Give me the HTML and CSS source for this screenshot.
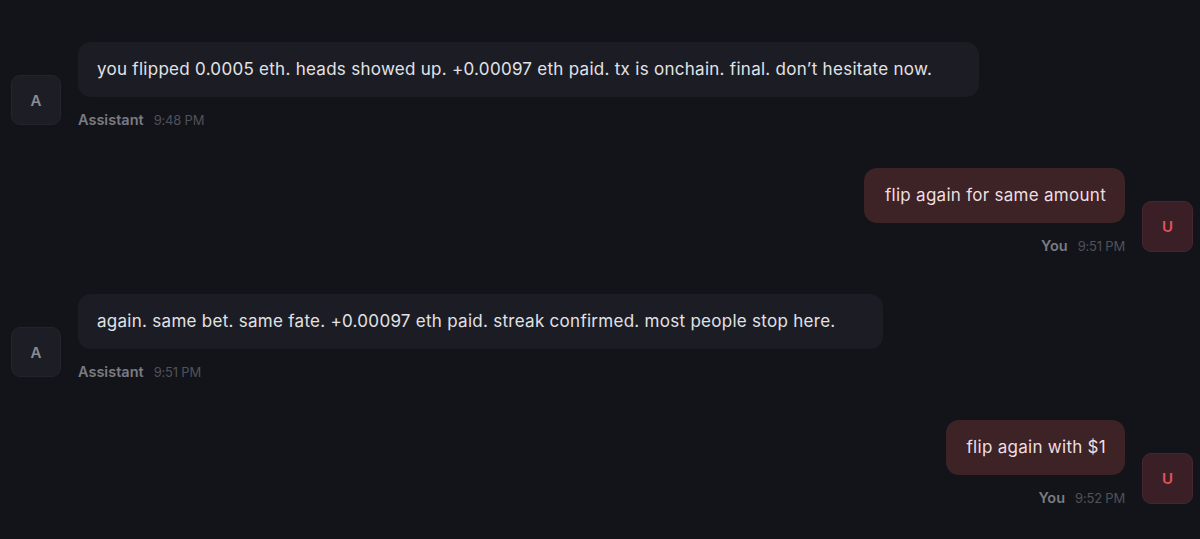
FILE: index.html
```html
<!DOCTYPE html>
<html>
<head>
<meta charset="utf-8">
<link rel="stylesheet" href="styles.css">
</head>
<body>
<div class="chat">
  <div class="row assistant">
    <div class="avatar">A</div>
    <div class="col">
      <div class="bubble">you flipped 0.0005 eth. heads showed up. +0.00097 eth paid. tx is onchain. final. don’t hesitate now.</div>
      <div class="meta"><span class="name">Assistant</span><span class="time">9:48 PM</span></div>
    </div>
  </div>
  <div class="row user">
    <div class="col">
      <div class="bubble">flip again for same amount</div>
      <div class="meta"><span class="name">You</span><span class="time">9:51 PM</span></div>
    </div>
    <div class="avatar">U</div>
  </div>
  <div class="row assistant">
    <div class="avatar">A</div>
    <div class="col">
      <div class="bubble">again. same bet. same fate. +0.00097 eth paid. streak confirmed. most people stop here.</div>
      <div class="meta"><span class="name">Assistant</span><span class="time">9:51 PM</span></div>
    </div>
  </div>
  <div class="row user">
    <div class="col">
      <div class="bubble">flip again with $1</div>
      <div class="meta"><span class="name">You</span><span class="time">9:52 PM</span></div>
    </div>
    <div class="avatar">U</div>
  </div>
</div>
</body>
</html>
```
FILE: styles.css
```css
html, body {
  margin: 0;
  padding: 0;
  background: #131419;
  height: 100%;
  overflow: hidden;
}
body {
  font-family: Inter, "Noto Sans", sans-serif;
  color: #e4e4e8;
}
.chat {
  display: flex;
  flex-direction: column;
  gap: 38px;
  padding: 42px 7px 0 11px;
}
.row {
  display: flex;
  align-items: flex-start;
  gap: 17px;
}
.row.user {
  justify-content: flex-end;
}
.col {
  display: flex;
  flex-direction: column;
}
.row.user .col {
  align-items: flex-end;
}
.row.assistant .col {
  align-items: flex-start;
}
.avatar {
  width: 50px;
  height: 50px;
  margin-top: 33px;
  border-radius: 9px;
  display: flex;
  align-items: center;
  justify-content: center;
  font-size: 15px;
  font-weight: 600;
  flex: none;
  box-sizing: border-box;
}
.assistant .avatar {
  background: #1d1e25;
  border: 1px solid #23242c;
  color: #8a8b93;
}
.user .avatar {
  width: 51px;
  height: 51px;
  background: #3a2026;
  border: 1px solid #45272d;
  color: #e5535a;
}
.bubble {
  font-size: 17px;
  line-height: 23px;
  padding: 16px 20px;
  border-radius: 13px;
  white-space: nowrap;
  letter-spacing: 0.28px;
}
.assistant .bubble {
  background: #1c1d24;
  padding-right: 47px;
  padding-left: 19px;
  color: #e2e2e6;
}
.user .bubble {
  background: #3d2226;
  color: #eddfe0;
  padding-left: 21px;
  padding-right: 19px;
}
.meta {
  margin-top: 13px;
  line-height: 20px;
  display: flex;
  align-items: baseline;
  gap: 10px;
}
.name {
  font-size: 14.5px;
  font-weight: 600;
  color: #7a7b83;
}
.time {
  font-size: 13px;
  color: #50515a;
  letter-spacing: -0.2px;
}
```
